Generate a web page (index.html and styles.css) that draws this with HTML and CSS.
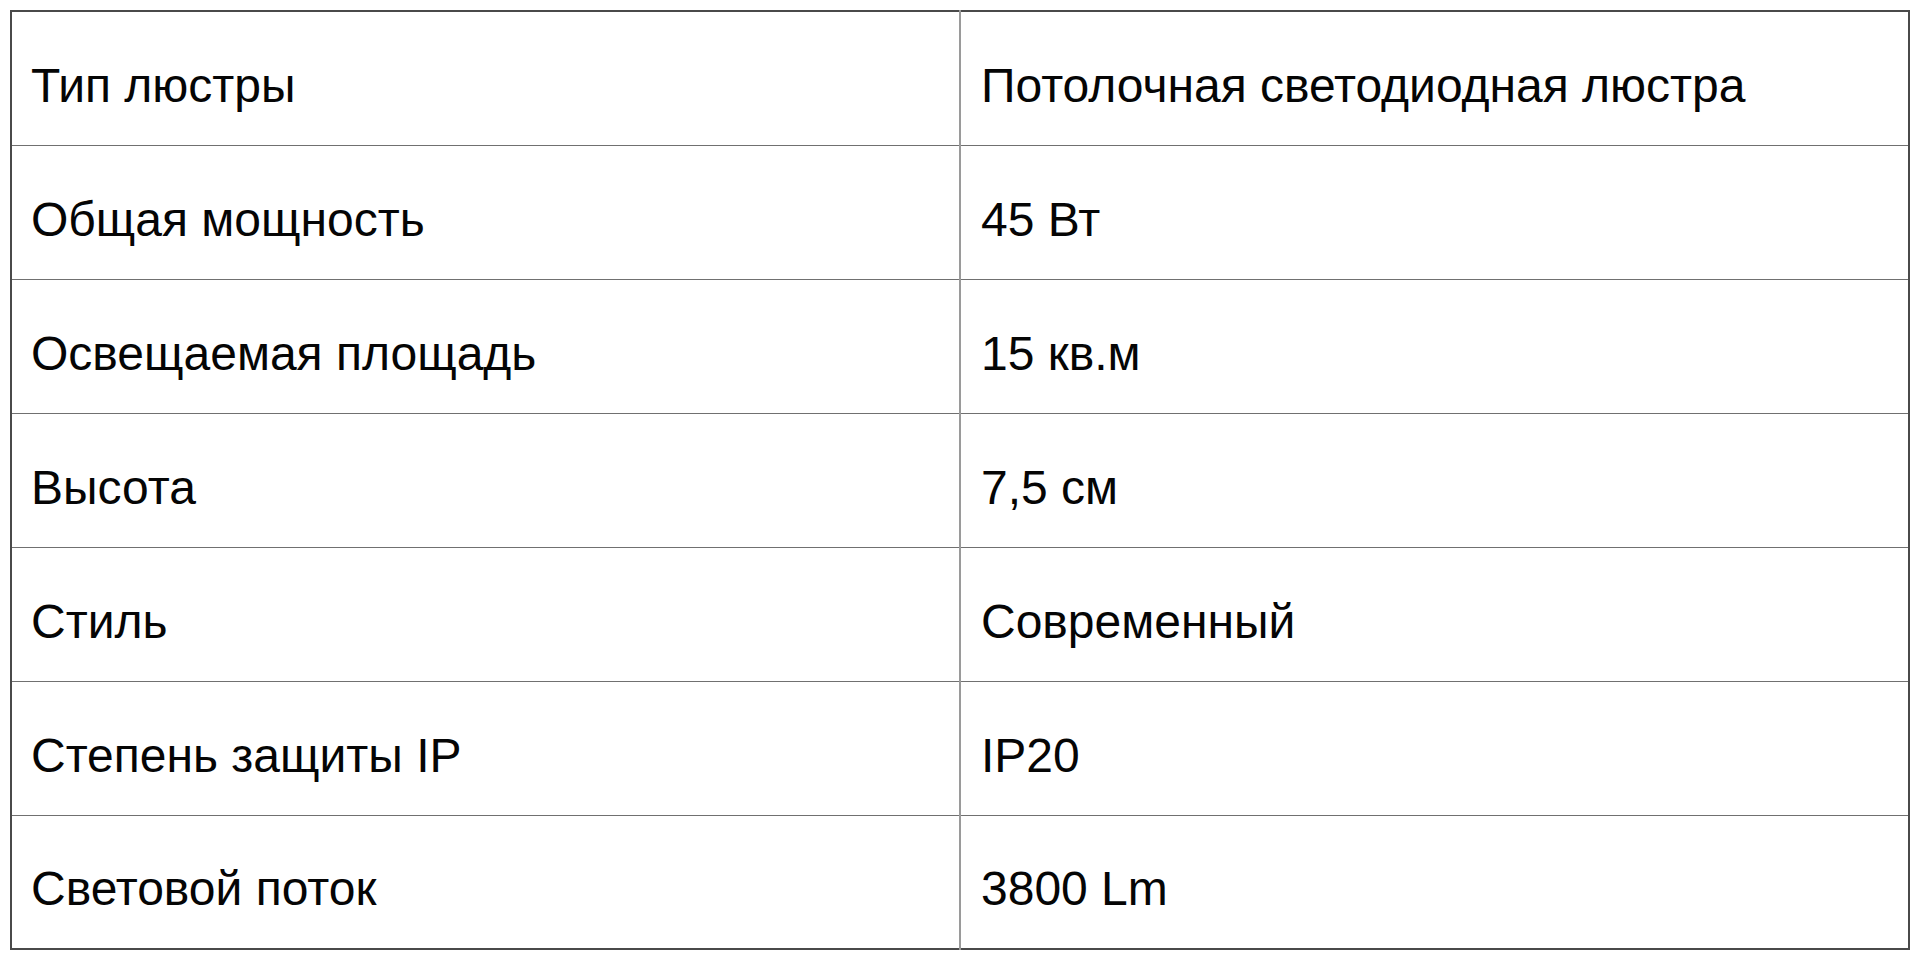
FILE: index.html
```html
<!DOCTYPE html>
<html lang="ru">
<head>
<meta charset="utf-8">
<title>Характеристики</title>
<link rel="stylesheet" href="styles.css">
</head>
<body>
<table class="specs">
  <tr><td class="k">Тип люстры</td><td class="v">Потолочная светодиодная люстра</td></tr>
  <tr><td class="k">Общая мощность</td><td class="v">45 Вт</td></tr>
  <tr><td class="k">Освещаемая площадь</td><td class="v">15 кв.м</td></tr>
  <tr><td class="k">Высота</td><td class="v">7,5 см</td></tr>
  <tr><td class="k">Стиль</td><td class="v">Современный</td></tr>
  <tr><td class="k">Степень защиты IP</td><td class="v">IP20</td></tr>
  <tr><td class="k">Световой поток</td><td class="v">3800 Lm</td></tr>
</table>
</body>
</html>
```
FILE: styles.css
```css
html, body {
  margin: 0;
  padding: 0;
  background: #ffffff;
}
body {
  padding: 10px;
  font-family: "Liberation Sans", Arial, sans-serif;
  color: #050505;
}
.specs {
  border-collapse: collapse;
  width: 1900px;
  border: 2px solid #4a4a4a;
  table-layout: fixed;
}
.specs td {
  height: 134px;
  padding: 14px 0 0 20px;
  font-size: 48px;
  vertical-align: middle;
  border-top: 1px solid #707070;
  border-bottom: 1px solid #707070;
  box-sizing: border-box;
}
.specs .k {
  width: 949px;
  padding-left: 19px;
  border-right: 2px solid #9a9a9a;
}
```
